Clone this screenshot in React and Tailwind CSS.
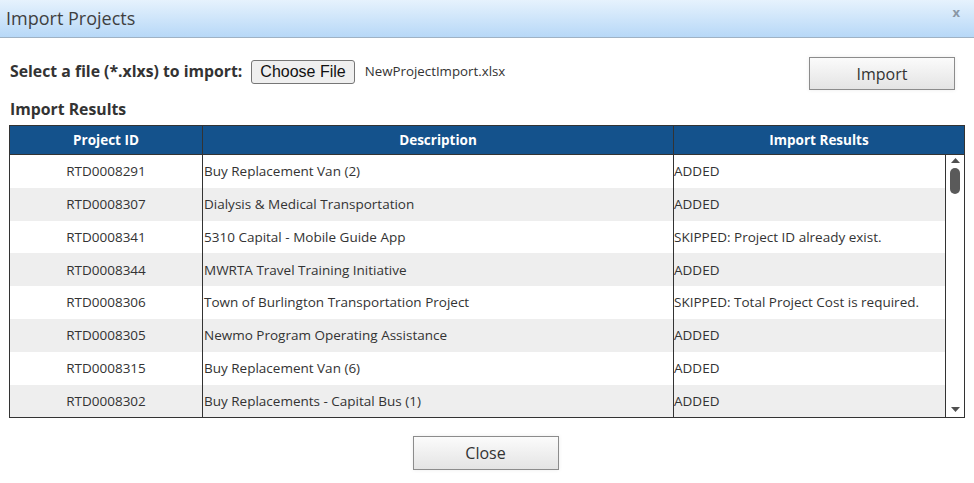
import { useState } from 'react';

const rows = [
  { id: 'RTD0008291', desc: 'Buy Replacement Van (2)', result: 'ADDED' },
  { id: 'RTD0008307', desc: 'Dialysis & Medical Transportation', result: 'ADDED' },
  { id: 'RTD0008341', desc: '5310 Capital - Mobile Guide App', result: 'SKIPPED: Project ID already exist.' },
  { id: 'RTD0008344', desc: 'MWRTA Travel Training Initiative', result: 'ADDED' },
  { id: 'RTD0008306', desc: 'Town of Burlington Transportation Project', result: 'SKIPPED: Total Project Cost is required.' },
  { id: 'RTD0008305', desc: 'Newmo Program Operating Assistance', result: 'ADDED' },
  { id: 'RTD0008315', desc: 'Buy Replacement Van (6)', result: 'ADDED' },
  { id: 'RTD0008302', desc: 'Buy Replacements - Capital Bus (1)', result: 'ADDED' },
];

export default function App() {
  const [fileName] = useState('NewProjectImport.xlsx');

  return (
    <div className="w-[974px] h-[483px] bg-white overflow-hidden font-['Open_Sans',_'Noto_Sans',_sans-serif] text-[#333]">
      {/* Title bar */}
      <div className="h-[38px] flex items-center justify-between pl-[6px] pr-[14px] bg-gradient-to-b from-[#e6f2fd] to-[#b7d8f7] border-b border-[#9fb2c4]">
        <h1 className="text-[18px] text-[#3f3f3f] leading-none -mt-[2px]">Import Projects</h1>
        <span className="text-[#8a97a5] font-bold text-[13px] leading-none -mt-[12px]">x</span>
      </div>

      <div className="px-[9px]">
        {/* File picker row */}
        <div className="flex items-center justify-between mt-[19px] pr-[10px]">
          <div className="flex items-center -mt-[3px]">
            <span className="font-bold text-[15.8px] text-[#333] pl-[1px]">Select a file (*.xlxs) to import:</span>
            <button className="ml-[9px] h-[24px] px-[8px] rounded-[3px] border border-[#767676] bg-[#efefef] font-['Liberation_Sans',_Arial,_sans-serif] text-[16px] text-[#111] leading-none">
              Choose File
            </button>
            <span className="ml-[10px] text-[13.3px] text-[#333]">{fileName}</span>
          </div>
          <button className="w-[146px] h-[33px] border border-[#8c8c8c] bg-gradient-to-b from-[#fbfbfb] to-[#e4e4e4] text-[16px] text-[#333] shadow-[0_0_4px_rgba(0,0,0,0.08)]">
            Import
          </button>
        </div>

        <h2 className="font-bold text-[15.8px] text-[#333] mt-[9px] pl-[1px] leading-[20px]">Import Results</h2>

        {/* Results table */}
        <div className="mt-[6px] w-[956px] border border-[#333]">
          <div className="flex h-[29px] bg-[#14528c] text-white font-bold text-[13.5px] border-b border-[#333]">
            <div className="w-[193px] flex items-center justify-center border-r border-[#333]">Project ID</div>
            <div className="w-[471px] flex items-center justify-center border-r border-[#333]">Description</div>
            <div className="flex-1 flex items-center justify-center">Import Results</div>
          </div>
          <div className="flex">
            <div className="flex-1">
              {rows.map((r, i) => (
                <div key={r.id} className={`flex h-[32.8px] text-[13.5px] text-[#333] ${i % 2 ? 'bg-[#eeeeee]' : 'bg-white'}`}>
                  <div className="w-[193px] flex items-center justify-center border-r border-[#333]">{r.id}</div>
                  <div className="w-[471px] flex items-center pl-[1px] border-r border-[#333]">{r.desc}</div>
                  <div className="flex-1 flex items-center">{r.result}</div>
                </div>
              ))}
            </div>
            {/* Scrollbar */}
            <div className="w-[19px] border-l border-[#333] bg-white flex flex-col items-center justify-between py-[3px]">
              <div className="flex flex-col items-center">
                <svg width="9" height="5" viewBox="0 0 9 5"><path d="M0 5 L4.5 0 L9 5 Z" fill="#505050" /></svg>
                <div className="mt-[5px] w-[10px] h-[26px] rounded-full bg-[#5a5a5a]" />
              </div>
              <svg width="9" height="5" viewBox="0 0 9 5" className="mb-[2px]"><path d="M0 0 L4.5 5 L9 0 Z" fill="#505050" /></svg>
            </div>
          </div>
        </div>

        {/* Footer */}
        <div className="flex justify-center mt-[18px] pr-[3px]">
          <button className="w-[146px] h-[34px] border border-[#8c8c8c] bg-gradient-to-b from-[#fbfbfb] to-[#e4e4e4] text-[16px] text-[#333] shadow-[0_0_4px_rgba(0,0,0,0.08)]">
            Close
          </button>
        </div>
      </div>
    </div>
  );
}
